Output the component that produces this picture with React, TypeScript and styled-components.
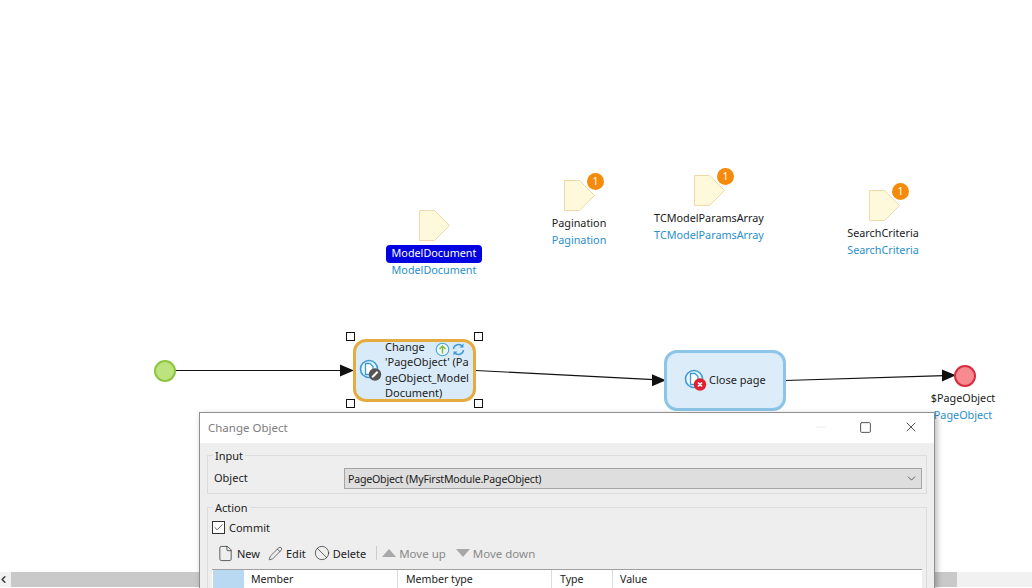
import React from "react";
import styled, { createGlobalStyle } from "styled-components";
import { Ban, Check, ChevronDown, ChevronLeft, File, Minus, Pencil, Square, X } from "lucide-react";

const GlobalStyle = createGlobalStyle`
  html, body {
    margin: 0;
    padding: 0;
    background: #fff;
    overflow: hidden;
  }
  body {
    font-family: "Noto Sans", "Liberation Sans", sans-serif;
    font-size: 11px;
    color: #1c1c1c;
  }
`;

const Page = styled.div`
  position: relative;
  width: 1032px;
  height: 588px;
  overflow: hidden;
  display: flex;
  flex-direction: column;
`;

const Canvas = styled.div`
  position: relative;
  height: 572px;
  flex: none;
`;

const Connectors = styled.svg`
  position: absolute;
  left: 0;
  top: 0;
`;

const Event = styled.div<{ $x: number; $y: number; $fill: string; $line: string }>`
  position: absolute;
  left: ${(p) => p.$x}px;
  top: ${(p) => p.$y}px;
  width: 22px;
  height: 22px;
  box-sizing: border-box;
  border-radius: 50%;
  background: ${(p) => p.$fill};
  border: 2px solid ${(p) => p.$line};
`;

const Activity = styled.div<{ $x: number; $y: number; $w: number; $h: number; $line: string; $fill: string }>`
  position: absolute;
  left: ${(p) => p.$x}px;
  top: ${(p) => p.$y}px;
  width: ${(p) => p.$w}px;
  height: ${(p) => p.$h}px;
  box-sizing: border-box;
  display: flex;
  align-items: center;
  background: ${(p) => p.$fill};
  border: 3px solid ${(p) => p.$line};
  border-radius: 13px;
`;

const IconSlot = styled.div`
  width: 29px;
  padding-left: 3px;
  box-sizing: border-box;
  display: flex;
  flex: none;
`;

const CloseContent = styled.div`
  display: flex;
  align-items: center;
  gap: 1px;
  padding-left: 17px;
`;

const ActivityText = styled.div`
  font-size: 11px;
  line-height: 15.3px;
  white-space: nowrap;
  color: #222;
  margin-top: -2px;
`;

const StatusIcons = styled.div`
  position: absolute;
  left: 79px;
  top: 0;
  display: flex;
  gap: 1px;
`;

const Handle = styled.div<{ $x: number; $y: number }>`
  position: absolute;
  left: ${(p) => p.$x}px;
  top: ${(p) => p.$y}px;
  width: 9px;
  height: 9px;
  box-sizing: border-box;
  background: #fff;
  border: 1px solid #111;
`;

const ParamShape = styled.svg<{ $x: number; $y: number }>`
  position: absolute;
  left: ${(p) => p.$x}px;
  top: ${(p) => p.$y}px;
`;

const Badge = styled.div<{ $x: number; $y: number }>`
  position: absolute;
  left: ${(p) => p.$x}px;
  top: ${(p) => p.$y}px;
  width: 17px;
  height: 17px;
  border-radius: 50%;
  background: #f58a0b;
  color: #fff;
  font-size: 10.5px;
  line-height: 17px;
  text-align: center;
`;

const Caption = styled.div<{ $cx: number; $y: number }>`
  position: absolute;
  left: ${(p) => p.$cx - 100}px;
  top: ${(p) => p.$y}px;
  width: 200px;
  display: flex;
  flex-direction: column;
  align-items: center;
  font-size: 10.8px;
  line-height: 17px;
`;

const Name = styled.span<{ $selected?: boolean }>`
  color: ${(p) => (p.$selected ? "#fff" : "#1a1a1a")};
  background: ${(p) => (p.$selected ? "#0000e0" : "transparent")};
  border-radius: 4px;
  padding: 0 ${(p) => (p.$selected ? 6 : 0)}px;
  height: 18px;
  line-height: ${(p) => (p.$selected ? 16 : 17)}px;
  margin-bottom: ${(p) => (p.$selected ? -1 : 0)}px;
`;

const TypeName = styled.span`
  color: #2a8fc7;
  margin-top: -1px;
`;

const ScrollBar = styled.div`
  display: flex;
  height: 15px;
  background: #f1f1f1;
`;

const ScrollArrow = styled.div`
  width: 11px;
  margin-left: -2px;
  padding-right: 2px;
  display: flex;
  align-items: center;
  color: #333;
`;

const ScrollThumb = styled.div`
  width: 946px;
  background: #c9c9c9;
`;

const Dialog = styled.div`
  position: absolute;
  left: 199px;
  top: 412px;
  width: 736px;
  height: 176px;
  box-sizing: border-box;
  background: #eeeeee;
  border: 1px solid #8f8f8f;
  border-bottom: none;
  box-shadow: 2px 2px 6px rgba(0, 0, 0, 0.28);
`;

const TitleBar = styled.div`
  height: 30px;
  background: #fff;
  display: flex;
  align-items: center;
  justify-content: space-between;
`;

const Title = styled.div`
  padding: 0 0 2px 8px;
  font-size: 11.5px;
  color: #7d7d7d;
`;

const WindowButtons = styled.div`
  display: flex;
  align-items: center;
  gap: 31px;
  padding: 0 15px 2px 0;
  color: #555;
`;

const FaintMinus = styled(Minus)`
  color: #ddd;
`;

const DialogBody = styled.div`
  padding: 3px 7px 0;
`;

const Group = styled.fieldset`
  margin: 0 0 4px;
  padding: 0 4px 4px;
  min-width: 0;
  border: 1px solid #dcdcdc;
`;

const Legend = styled.legend`
  margin-left: 1px;
  padding: 2px 2px 0;
  line-height: 16px;
  font-size: 11px;
`;

const ObjectRow = styled.div`
  display: flex;
  align-items: center;
  margin-top: 4px;
`;

const ObjectLabel = styled.div`
  width: 132px;
  padding: 0 0 2px 2px;
  box-sizing: border-box;
`;

const Select = styled.div`
  flex: 1;
  height: 21px;
  box-sizing: border-box;
  display: flex;
  align-items: center;
  justify-content: space-between;
  padding: 0 3px;
  background: #dedede;
  border: 1px solid #a4a4a4;
  font-size: 10.6px;
  letter-spacing: -0.2px;
`;

const CommitRow = styled.div`
  display: flex;
  align-items: center;
  gap: 4px;
  margin-top: 4px;
  height: 14px;
`;

const CheckBox = styled.div`
  width: 13px;
  height: 13px;
  box-sizing: border-box;
  display: flex;
  align-items: center;
  justify-content: center;
  background: #fff;
  border: 1px solid #333;
`;

const Toolbar = styled.div`
  display: flex;
  align-items: center;
  height: 20px;
  margin-top: 9px;
  padding-left: 5px;
  gap: 8px;
`;

const ToolButton = styled.div<{ $disabled?: boolean }>`
  display: flex;
  align-items: center;
  gap: 3px;
  font-size: ${(p) => (p.$disabled ? 11.5 : 11)}px;
  color: ${(p) => (p.$disabled ? "#8a8a8a" : "#222")};
`;

const ToolDivider = styled.div`
  width: 1px;
  height: 14px;
  margin-left: 2px;
  background: #ccc;
`;

const MoveGroup = styled.div`
  display: flex;
  align-items: center;
  gap: 10px;
  margin-left: -3px;
`;

const MemberTable = styled.div`
  display: grid;
  grid-template-columns: 32px 154px 154px 61px 1fr;
  height: 18px;
  margin-top: 6px;
  background: #fff;
  border-top: 1px solid #a0a0a0;
`;

const SelectorCell = styled.div`
  background: #b9d8f1;
  margin-left: 1px;
`;

const HeaderCell = styled.div<{ $pad: number; $rule?: boolean }>`
  padding-left: ${(p) => p.$pad}px;
  border-right: ${(p) => (p.$rule ? "1px solid #dcdcdc" : "none")};
  line-height: 18px;
  font-size: 10.6px;
`;

const params = [
  { x: 419, y: 210, cx: 434, labelY: 245, name: "ModelDocument", selected: true },
  { x: 564, y: 180, cx: 579, labelY: 214, name: "Pagination", badge: true },
  { x: 694, y: 175, cx: 709, labelY: 209, name: "TCModelParamsArray", badge: true },
  { x: 869, y: 190, cx: 883, labelY: 224, name: "SearchCriteria", badge: true },
];

const handles = [
  { x: 346, y: 332 },
  { x: 474, y: 332 },
  { x: 346, y: 399 },
  { x: 474, y: 399 },
];

const columns = [
  { label: "Member", pad: 7, rule: true },
  { label: "Member type", pad: 8, rule: true },
  { label: "Type", pad: 8, rule: true },
  { label: "Value", pad: 7 },
];

// page-with-circle glyph used on both activities, the corner mark differs
const ActivityIcon = ({ kind }: { kind: "change" | "close" }) => (
  <svg width="24" height="24" viewBox="0 0 24 24">
    <circle cx="10" cy="10" r="8.5" fill="#eaf5fc" stroke="#3f9bd6" strokeWidth="1.6" />
    <path d="M6.5 4.5h4.5l3 3v8h-7.5z" fill="#fff" stroke="#3f9bd6" strokeWidth="1.3" />
    {kind === "change" ? (
      <>
        <circle cx="16" cy="15.5" r="6.2" fill="#555" />
        <path d="M13.2 18.2l5.4-5.4" stroke="#fff" strokeWidth="2" />
      </>
    ) : (
      <>
        <circle cx="16" cy="15.5" r="6.2" fill="#e0202f" />
        <path d="M14 13.5l4 4M18 13.5l-4 4" stroke="#fff" strokeWidth="1.6" />
      </>
    )}
  </svg>
);

const App = () => {
  return (
    <>
      <GlobalStyle />
      <Page>
        <Canvas>
          <Connectors width="1032" height="572">
            <g stroke="#111" strokeWidth="1.2" fill="none">
              <path d="M175 370.5H342" />
              <path d="M476 370.5L654 379.6" />
              <path d="M785 380.5L944 375.6" />
            </g>
            <g fill="#111">
              <path d="M354 370.5L340 364.5V376.5z" />
              <path d="M666 380.2L652 374.2V386.2z" />
              <path d="M956 375.2L942 369.6V381.6z" />
            </g>
          </Connectors>

          <Event $x={154} $y={360} $fill="#bde37f" $line="#8cc63f" />
          <Event $x={954} $y={365} $fill="#f68a90" $line="#d92c3d" />

          <Activity $x={353} $y={339} $w={123} $h={63} $line="#e6ab3e" $fill="#d9ebf8">
            <IconSlot>
              <ActivityIcon kind="change" />
            </IconSlot>
            <ActivityText>
              Change
              <br />
              'PageObject' (Pa
              <br />
              geObject_Model
              <br />
              Document)
            </ActivityText>
            <StatusIcons>
              <svg width="15" height="15" viewBox="0 0 15 15">
                <circle cx="7.5" cy="7.5" r="6.3" fill="#eef7fc" stroke="#4aa3d8" strokeWidth="1.1" />
                <path d="M7.5 11.5V4M4.5 7l3-3 3 3" fill="none" stroke="#7fbf3f" strokeWidth="1.5" />
              </svg>
              <svg width="15" height="15" viewBox="0 0 15 15">
                <path
                  d="M2.5 7a5 5 0 0 1 9-2.5M12.5 8a5 5 0 0 1-9 2.5"
                  fill="none"
                  stroke="#3f9bd6"
                  strokeWidth="1.5"
                />
                <path d="M12.5 1.5v4h-4zM2.5 13.5v-4h4z" fill="#3f9bd6" />
              </svg>
            </StatusIcons>
          </Activity>
          {handles.map((h) => (
            <Handle key={`${h.x}-${h.y}`} $x={h.x} $y={h.y} />
          ))}

          <Activity $x={664} $y={350} $w={122} $h={61} $line="#8cc5e8" $fill="#dcedf9">
            <CloseContent>
              <ActivityIcon kind="close" />
              <ActivityText>Close page</ActivityText>
            </CloseContent>
          </Activity>

          {params.map((p) => (
            <React.Fragment key={p.name}>
              <ParamShape $x={p.x} $y={p.y} width="32" height="32" viewBox="0 0 32 32">
                <path d="M.5.5H15.5L30.5 15.5 15.5 30.5H.5z" fill="#fff9dc" stroke="#f0d9a8" />
              </ParamShape>
              {p.badge && <Badge $x={p.x + 23} $y={p.y - 7}>1</Badge>}
              <Caption $cx={p.cx} $y={p.labelY}>
                <Name $selected={p.selected}>{p.name}</Name>
                <TypeName>{p.name}</TypeName>
              </Caption>
            </React.Fragment>
          ))}

          <Caption $cx={963} $y={389}>
            <Name>$PageObject</Name>
            <TypeName>PageObject</TypeName>
          </Caption>
        </Canvas>

        <ScrollBar>
          <ScrollArrow>
            <ChevronLeft size={11} strokeWidth={3} />
          </ScrollArrow>
          <ScrollThumb />
        </ScrollBar>

        <Dialog>
          <TitleBar>
            <Title>Change Object</Title>
            <WindowButtons>
              <FaintMinus size={14} strokeWidth={1} />
              <Square size={13} strokeWidth={1} absoluteStrokeWidth />
              <X size={16} strokeWidth={1} absoluteStrokeWidth />
            </WindowButtons>
          </TitleBar>
          <DialogBody>
            <Group>
              <Legend>Input</Legend>
              <ObjectRow>
                <ObjectLabel>Object</ObjectLabel>
                <Select>
                  PageObject (MyFirstModule.PageObject)
                  <ChevronDown size={13} strokeWidth={1.2} />
                </Select>
              </ObjectRow>
            </Group>
            <Group>
              <Legend>Action</Legend>
              <CommitRow>
                <CheckBox>
                  <Check size={11} strokeWidth={1.5} />
                </CheckBox>
                Commit
              </CommitRow>
              <Toolbar>
                <ToolButton>
                  <File size={17} strokeWidth={1} />
                  New
                </ToolButton>
                <ToolButton>
                  <Pencil size={15} strokeWidth={1} />
                  Edit
                </ToolButton>
                <ToolButton>
                  <Ban size={16} strokeWidth={1} />
                  Delete
                </ToolButton>
                <ToolDivider />
                <MoveGroup>
                  <ToolButton $disabled>
                    <svg width="14" height="8" viewBox="0 0 14 8">
                      <path d="M7 0l7 8H0z" fill="#a8a8a8" />
                    </svg>
                    Move up
                  </ToolButton>
                  <ToolButton $disabled>
                    <svg width="14" height="8" viewBox="0 0 14 8">
                      <path d="M0 0h14L7 8z" fill="#a8a8a8" />
                    </svg>
                    Move down
                  </ToolButton>
                </MoveGroup>
              </Toolbar>
              <MemberTable>
                <SelectorCell />
                {columns.map((c) => (
                  <HeaderCell key={c.label} $pad={c.pad} $rule={c.rule}>
                    {c.label}
                  </HeaderCell>
                ))}
              </MemberTable>
            </Group>
          </DialogBody>
        </Dialog>
      </Page>
    </>
  );
};

export default App;
